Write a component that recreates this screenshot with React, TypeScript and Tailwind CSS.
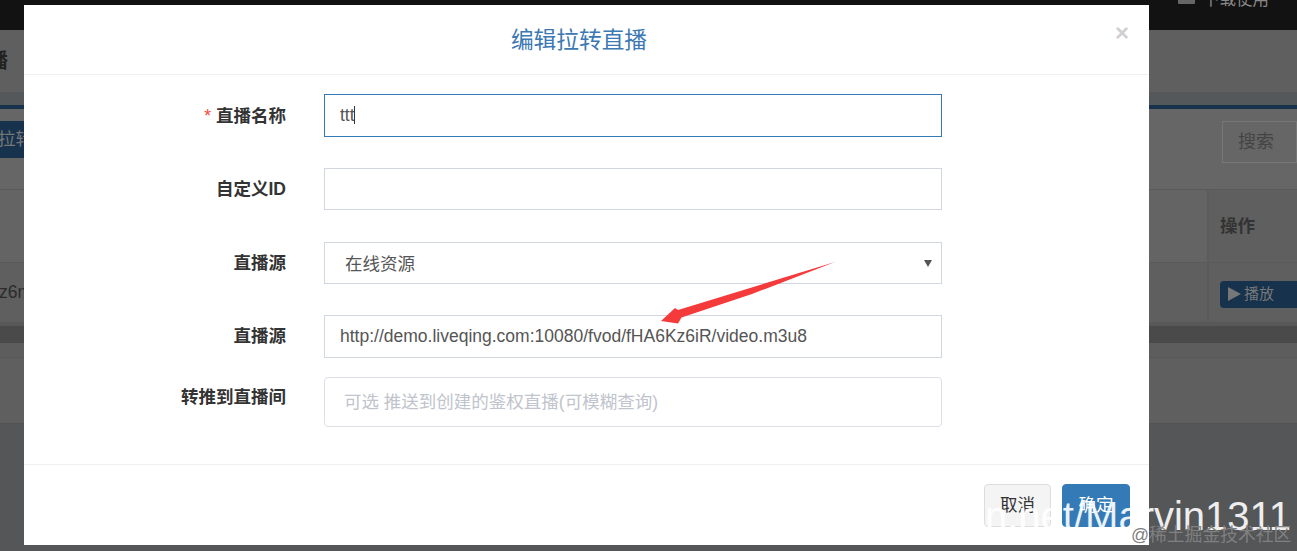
const cjk = "font-['Liberation_Sans','Noto_Sans_CJK_SC',sans-serif]";

function Row({ label, required, top, labelClass = "mt-[-1px]", className, children }: { label: string; required?: boolean; top?: boolean; labelClass?: string; className: string; children: React.ReactNode }) {
  return (
    <div className={`flex gap-[38px] ${top ? "items-start" : "items-center"} ${className}`}>
      <label className={`${labelClass} w-[262px] text-right text-[17.5px] font-bold leading-[20px] text-[#333]`}>
        {required && <span className="mr-[5px] font-normal text-[#f5483b]">*</span>}
        {label}
      </label>
      {children}
    </div>
  );
}

const field = "h-full w-[618px] border bg-white px-[15px] text-[17.5px] text-[#555] outline-none";

export default function App() {
  return (
    <div className={`relative h-[551px] w-[1297px] overflow-hidden bg-[#555658] ${cjk}`}>
      {/* dimmed page */}
      <div className="flex h-[30px] items-start justify-end bg-[#121212] pr-[28px]">
        <div className="mt-[-11px] flex items-center gap-[8px] text-[16.5px] leading-[20px] text-[#888]">
          <span className="h-[9px] w-[17px] rounded-[1px] bg-[#666]" />
          下载使用
        </div>
      </div>
      <div className="flex h-[62px] items-center overflow-hidden bg-[#5f5f5f]">
        <span className="ml-[-12px] whitespace-nowrap text-[20px] font-bold text-[#222]">播</span>
      </div>
      <div className="h-[13px] bg-[#55585a]" />
      <div className="h-[4px] bg-[#16324c]" />
      <div className="flex h-[81px] items-start justify-between border-b border-[#5a5a5a] bg-[#666] pt-[12px]">
        <div className="flex h-[37px] w-[40px] items-center overflow-hidden rounded-r-[3px] bg-[#16324c] text-[17.5px] text-[#777]">
          <span className="ml-[-2px] whitespace-nowrap">拉转</span>
        </div>
        <div className="flex h-[42px] w-[75px] items-center border border-[#777] pl-[15px] text-[18px] text-[#444]">搜索</div>
      </div>
      <div className="flex h-[73px] justify-end border-b border-[#5a5a5a] bg-[#646464]">
        <div className="flex w-[90px] items-center border-l-[2px] border-[#5b5b5b] bg-[#5f5f5f] pl-[11px] text-[17.5px] font-bold text-[#333]">操作</div>
      </div>
      <div className="flex h-[60px] items-center justify-between border-b border-[#585858] bg-[#5f5f5f]">
        <span className="ml-[-1px] text-[17.5px] text-[#2b2b2b]">z6m</span>
        <div className="flex h-full w-[90px] items-center border-l-[2px] border-[#5a5a5a] pl-[11px]">
          <div className="mt-[3px] flex h-[27px] w-[79px] items-center gap-[3px] rounded-l-[4px] bg-[#16324c] pl-[8px] text-[15px] text-[#777]">
            <svg width="13" height="14" viewBox="0 0 13 14"><path d="M0 0L13 7L0 14Z" fill="#777" /></svg>
            播放
          </div>
        </div>
      </div>
      <div className="h-[3px] bg-[#585858]" />
      <div className="h-[17px] bg-[#4a4a4a]" />
      <div className="h-[15px] border-b border-[#585858] bg-[#5d5d5d]" />
      <div className="h-[66px] border-b border-[#525252] bg-[#5f5f5f]" />

      {/* modal */}
      <div className="absolute left-[24px] top-[5px] flex h-[540px] w-[1125px] flex-col bg-white">
        <header className="relative flex h-[70px] items-center justify-center border-b border-[#f0f0f0] pr-[15px]">
          <h2 className="mt-[2px] text-[22.7px] font-normal text-[#3c78b4]">编辑拉转直播</h2>
          <span className="absolute right-[20px] top-[14px] text-[24px] font-bold leading-[28px] text-[#d0d0d0]">×</span>
        </header>
        <div className="flex flex-col pt-[19px]">
          <Row label="直播名称" required labelClass="mt-0" className="mb-[31px] h-[43px]">
            <div className="relative h-full">
              <input readOnly value="ttt" className={`${field} border-[#337ab7]`} />
              <span className="absolute left-[30px] top-[12px] h-[18px] w-px bg-[#333]" />
            </div>
          </Row>
          <Row label="自定义ID" className="mb-[32px] h-[42px]">
            <input readOnly value="" className={`${field} border-[#d2d6de]`} />
          </Row>
          <Row label="直播源" className="mb-[31px] h-[42px]">
            <div className={`${field} flex items-center justify-between border-[#d2d6de] pl-[20px] pr-[9px]`}>
              <span className="mt-[2px]">在线资源</span>
              <svg width="8" height="7" viewBox="0 0 8 7"><path d="M0 0H8L4 7Z" fill="#555" /></svg>
            </div>
          </Row>
          <Row label="直播源" className="mb-[19px] h-[43px]">
            <input readOnly value="http://demo.liveqing.com:10080/fvod/fHA6Kz6iR/video.m3u8" className={`${field} border-[#d2d6de]`} />
          </Row>
          <Row label="转推到直播间" top labelClass="mt-0" className="h-[50px] pt-[10px]">
            <input
              readOnly
              placeholder="可选 推送到创建的鉴权直播(可模糊查询)"
              className="mt-[-10px] h-[50px] w-[618px] rounded-[4px] border border-[#dcdfe6] bg-white px-[19px] text-[17.5px] text-[#555] outline-none placeholder:text-[#c0c4cc]"
            />
          </Row>
        </div>
        <footer className="mt-[37px] flex flex-1 items-start justify-end gap-[11px] border-t border-[#f0f0f0] pr-[19px] pt-[19px]">
          <button className="h-[43px] w-[67px] rounded-[4px] border border-[#ddd] bg-[#f4f4f4] text-[17.5px] text-[#333]">取消</button>
          <button className="h-[43px] w-[68px] rounded-[4px] border border-[#337ab7] bg-[#337ab7] text-[17.5px] text-white">确定</button>
        </footer>
      </div>

      {/* annotation arrow */}
      <svg className="absolute left-0 top-0" width="1297" height="551" viewBox="0 0 1297 551">
        <path d="M835 262L678 310L675 308L661 321L678 323.5L681.5 317.5L752 294Z" fill="#f53a3c" />
      </svg>

      {/* watermarks */}
      <span className="absolute left-[985px] top-[492px] whitespace-nowrap font-['Liberation_Sans',sans-serif] text-[40px] leading-[48px] text-white/90">n.net/Marvin1311</span>
      <span className="absolute left-[1131px] top-[524px] whitespace-nowrap text-[17.8px] leading-[22px] text-[#808080]">@稀土掘金技术社区</span>
    </div>
  );
}
